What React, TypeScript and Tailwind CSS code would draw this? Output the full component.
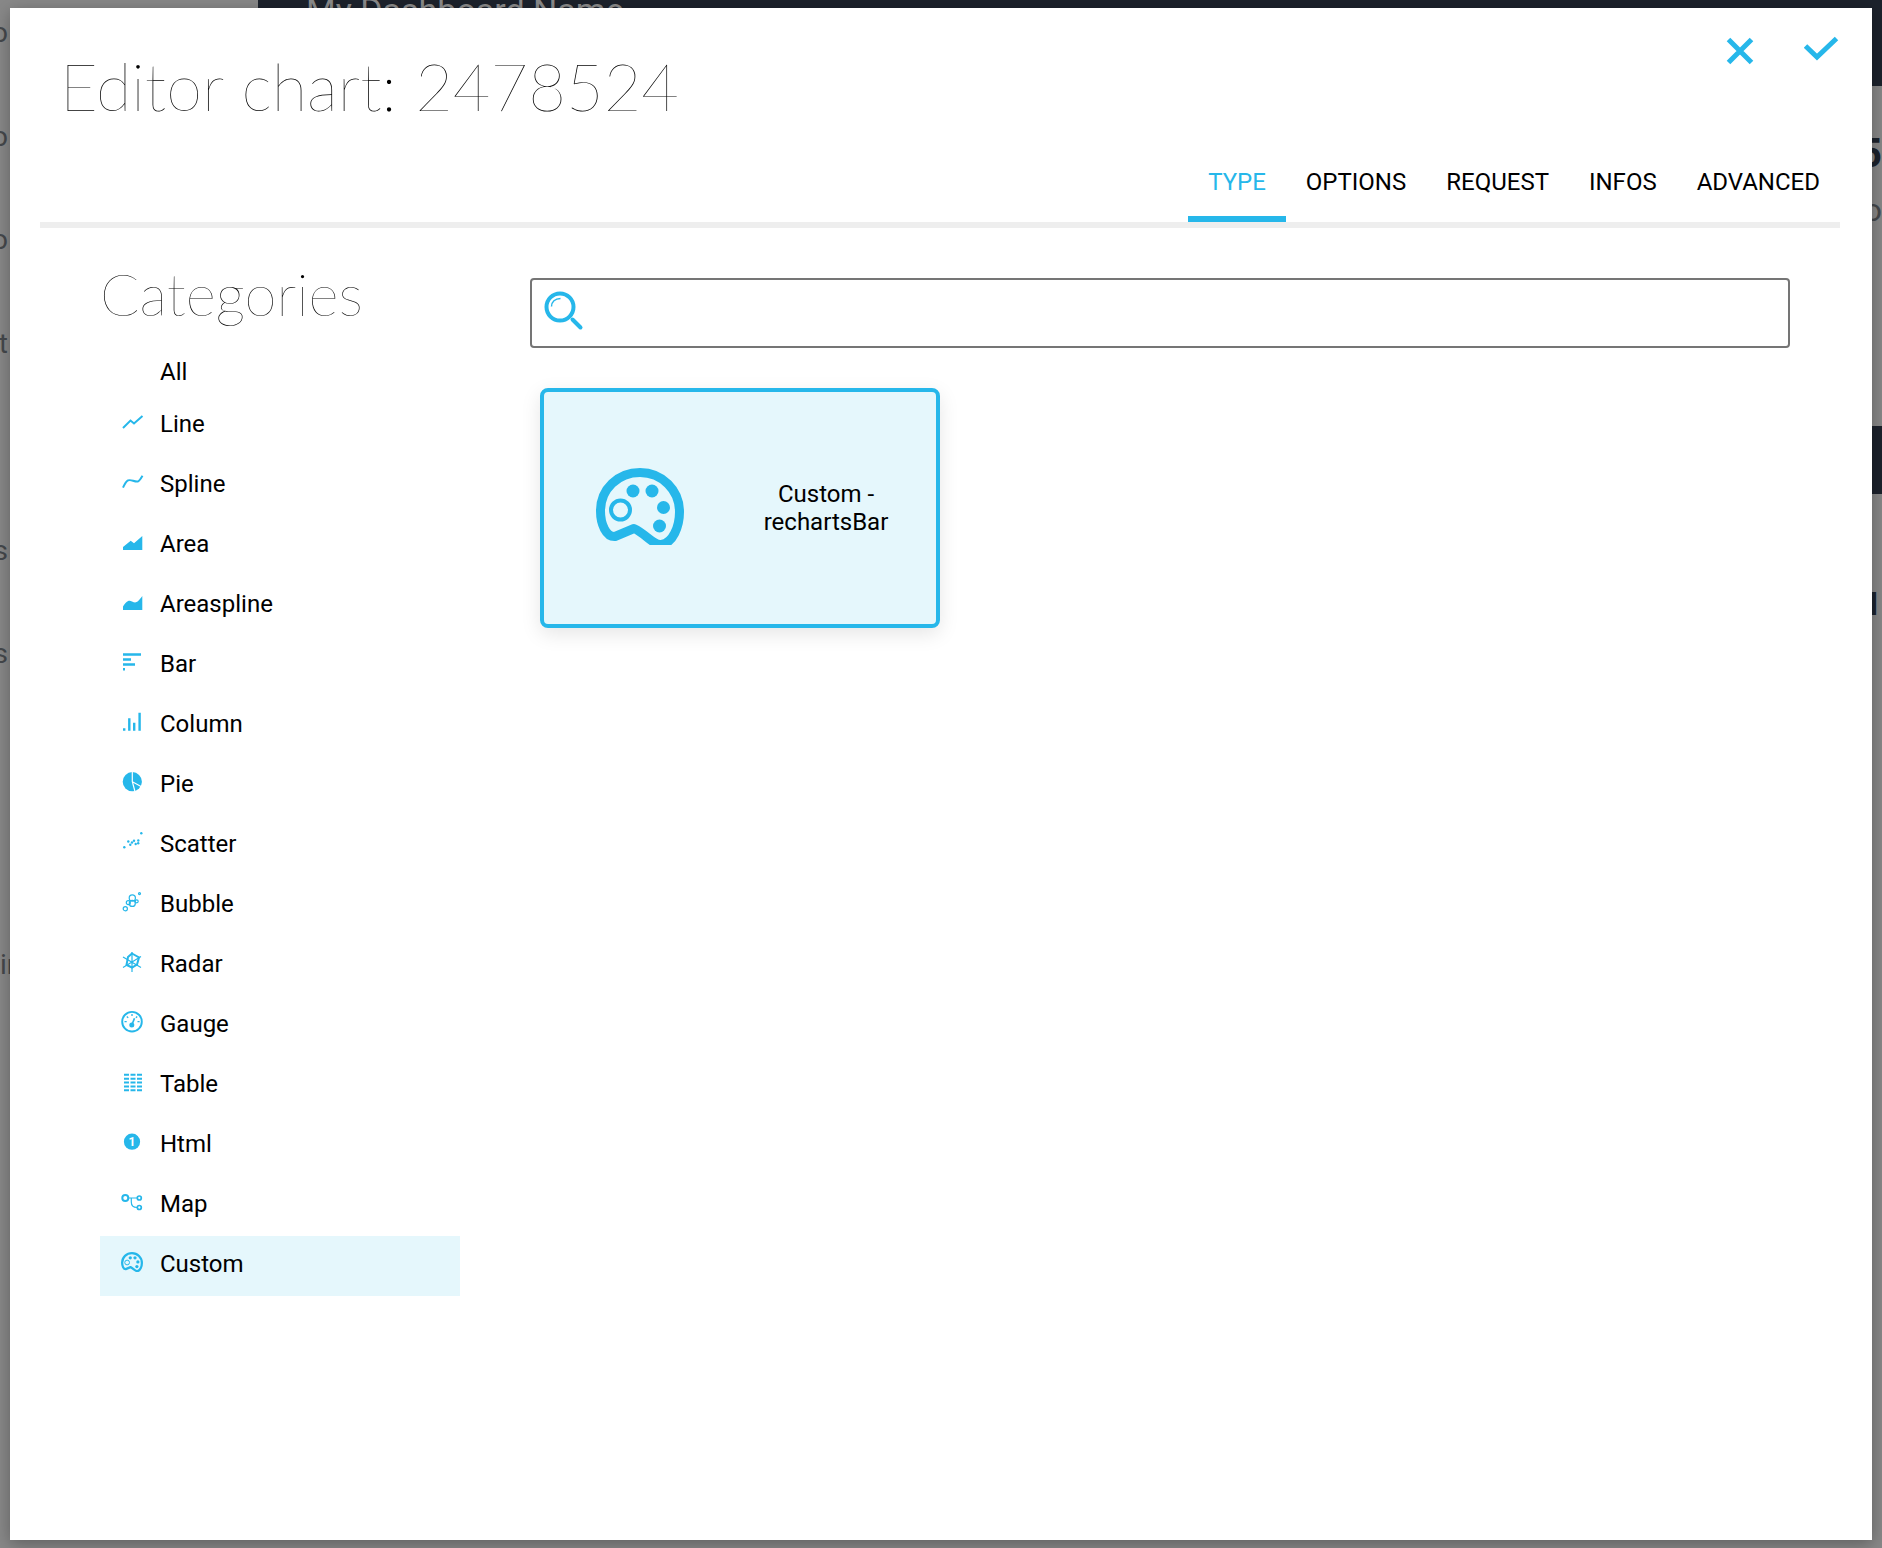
import React, { useState } from "react";

const tabs = ["TYPE", "OPTIONS", "REQUEST", "INFOS", "ADVANCED"];

function Palette({ className }: { className: string }) {
  return (
    <svg viewBox="0 0 88 77" className={className} fill="none" stroke="currentColor" aria-hidden="true">
      <path
        d="M19 68.5C10 69 4.500 56 4.500 43C4.500 21 22 4.500 44 4.500C66 4.500 83.500 22 83.500 44C83.500 58 77 75.500 65 76.500C57 77 50 66 38 60.500Z"
        strokeWidth="9"
        strokeLinejoin="round"
      />
      <circle cx="24.5" cy="42" r="9.5" strokeWidth="4" />
      <g fill="currentColor" stroke="none">
        <circle cx="37" cy="23" r="6.5" />
        <circle cx="56" cy="23" r="6.5" />
        <circle cx="67.500" cy="39.500" r="6.500" />
        <circle cx="63.500" cy="58" r="6.500" />
      </g>
    </svg>
  );
}

const dots = [[4.3, 17.3], [21.3, 3.3], [8.3, 11.5], [10.3, 14.7], [12, 12.5], [14, 10.7], [15.7, 14], [18.3, 10.5], [18.2, 13.2]];
const bubbles = [[5.3, 18.7, 2.1], [8.3, 12.7, 2], [12.3, 8, 3.1], [12.3, 13.4, 3], [16.7, 11.3, 1.5], [19.5, 3.6, 1]];
const tableRows = [4.8, 8.8, 12.6, 16.4, 20.2];

const categories: { name: string; icon: React.ReactNode }[] = [
  { name: "Line", icon: <path d="M3 18L10.500 10.500L14 13.500L22.500 6" strokeWidth="2" /> },
  { name: "Spline", icon: <path d="M3 17.700C7 9 9 9.500 13 10.700C18 12.300 18.500 12.500 22.500 5.700" strokeWidth="2" /> },
  { name: "Area", icon: <path d="M3 20V17L10.700 10.700L14 13.300L22.300 6V20Z" fill="currentColor" stroke="none" /> },
  { name: "Areaspline", icon: <path d="M3 20V16.500C7 10.500 9 10 12 11.500C16 13.300 17 13 22.300 6V20Z" fill="currentColor" stroke="none" /> },
  { name: "Bar", icon: <path d="M3 4.500H21M3 9.500H11M3 14.500H15M3 19.300H5" strokeWidth="2.400" /> },
  { name: "Column", icon: <path d="M4.200 20.700V18.300M9.300 20.700V8.300M14.200 20.700V12.700M19.600 20.700V2.700" strokeWidth="2.400" /> },
  {
    name: "Pie",
    icon: (
      <>
        <circle cx="12.300" cy="11.700" r="9.600" fill="currentColor" stroke="none" />
        <path d="M12.300 2V11.700L22 17M12.300 11.700L15 21.500" stroke="white" strokeWidth="1.200" />
      </>
    ),
  },
  { name: "Scatter", icon: <g fill="currentColor" stroke="none">{dots.map(([x, y]) => <circle key={x} cx={x} cy={y} r="1.200" />)}</g> },
  { name: "Bubble", icon: <g strokeWidth="1.200">{bubbles.map(([x, y, r]) => <circle key={`${x}-${y}`} cx={x} cy={y} r={r} />)}</g> },
  {
    name: "Radar",
    icon: (
      <>
        <path d="M12 3.500L19 7.500L17 14.500L12 17.500L6.500 15L8 7Z" strokeWidth="2" />
        <path d="M12 2V22M3 7L21 17.500M21 6.500L3 17.500" strokeWidth="1.200" />
      </>
    ),
  },
  {
    name: "Gauge",
    icon: (
      <>
        <circle cx="12" cy="11.700" r="9.800" strokeWidth="1.900" />
        <circle cx="11.800" cy="15" r="2.500" fill="currentColor" stroke="none" />
        <path d="M11.800 15L14.500 8.300" strokeWidth="1.700" />
        <path d="M12 4V6M4.500 11.700H6.700M17.500 11.700H19.600M6.800 6.500L8.200 7.900M17.200 6.500L15.900 7.800" strokeWidth="1.300" />
      </>
    ),
  },
  {
    name: "Table",
    icon: <g strokeWidth="2">{tableRows.map((y) => <path key={y} d={`M4 ${y}H9M10.500 ${y}H15.500M17 ${y}H22`} />)}</g>,
  },
  {
    name: "Html",
    icon: (
      <>
        <circle cx="12" cy="11.700" r="8.100" fill="currentColor" stroke="none" />
        <text x="12" y="16" textAnchor="middle" className="fill-white stroke-none text-[12px] font-bold">1</text>
      </>
    ),
  },
  {
    name: "Map",
    icon: (
      <>
        <circle cx="5.300" cy="8" r="3" strokeWidth="2" />
        <circle cx="19.300" cy="8" r="2" strokeWidth="1.700" />
        <circle cx="19.300" cy="17.500" r="2" strokeWidth="1.700" />
        <path d="M8.500 8H17M11.300 8V12C11.300 16 13 17.500 17 17.500" strokeWidth="1.200" />
      </>
    ),
  },
];

const menu = ["o", "o", "o", "t", "", "s", "s", "", "", "in"];

function Backdrop() {
  return (
    <div aria-hidden="true" className="absolute inset-0 flex overflow-hidden bg-[#888888] text-[#45484c]">
      <div className="w-[258px] shrink-0">
        <ul className="grid h-[1035px] grid-rows-10 text-[28px] leading-[66px]">
          {menu.map((m, i) => (
            <li key={i} className={m.length > 1 ? "flex w-2 justify-start" : "flex w-2 justify-end"}>{m}</li>
          ))}
        </ul>
      </div>
      <div className="flex grow flex-col">
        <div className="h-[86px] bg-[#1c222c] pl-12 text-[34px] leading-5 text-[#8b8b8b]">My Dashboard Name</div>
        <div className="flex h-[340px] flex-col items-end pt-10 leading-14">
          <span className="text-[40px] font-bold text-[#1c222c]">5</span>
          <span className="text-[32px]">o</span>
        </div>
        <div className="h-[68px] bg-[#1c222c]" />
        <div className="pt-[86px] pr-1 text-right text-[32px] leading-12 font-bold text-[#1c222c]">l</div>
      </div>
    </div>
  );
}

export default function App() {
  const [tab, setTab] = useState("TYPE");
  const [category, setCategory] = useState("Custom");
  const [query, setQuery] = useState("");

  return (
    <div className="relative flex min-h-screen px-2.5 py-2 font-[Roboto,sans-serif] text-2xl text-black">
      <Backdrop />
      <div role="dialog" aria-labelledby="editor-title" className="relative flex grow flex-col bg-white pr-8 pl-[30px] shadow-[0_4px_16px_rgba(0,0,0,0.3)]">
        <header className="border-b-[6px] border-[#eeeeee]">
          <div className="flex h-[134px] items-start justify-between pl-5">
            <h1 id="editor-title" className="pt-[38px] font-[Lato,sans-serif] text-[65px] leading-20 font-thin text-black">
              Editor chart: 2478524
            </h1>
            <div className="flex gap-12 pt-[27px] text-[#26b7ea]">
              <button type="button" aria-label="Close">
                <svg viewBox="0 0 32 32" className="size-8" fill="none" stroke="currentColor" strokeWidth="5" aria-hidden="true">
                  <path d="M4.500 4.500L27.500 27.500M27.500 4.500L4.500 27.500" />
                </svg>
              </button>
              <button type="button" aria-label="Confirm">
                <svg viewBox="0 0 36 32" className="h-8 w-9" fill="none" stroke="currentColor" strokeWidth="5" aria-hidden="true">
                  <path d="M1.500 11L13 22L32.500 3.500" />
                </svg>
              </button>
            </div>
          </div>
          <div role="tablist" className="flex h-20 justify-end">
            {tabs.map((t) => (
              <button
                key={t}
                type="button"
                role="tab"
                aria-selected={t === tab}
                onClick={() => setTab(t)}
                className={
                  t === tab
                    ? "border-b-[6px] border-[#26b7ea] px-5 pt-1.5 text-[#26b7ea]"
                    : "border-b-[6px] border-transparent px-5 pt-1.5"
                }
              >
                {t}
              </button>
            ))}
          </div>
        </header>

        <div className="flex grow gap-[70px] pr-[50px] pb-10 pl-[60px]">
          <nav aria-labelledby="categories-title" className="w-[360px] shrink-0">
            <h2 id="categories-title" className="h-[116px] pt-[34px] font-[Lato,sans-serif] text-[58px] leading-16 font-thin text-black">
              Categories
            </h2>
            <ul>
              <li>
                <button type="button" onClick={() => setCategory("All")} className="flex h-[52px] w-full pt-3.5 pl-[60px] leading-7">
                  All
                </button>
              </li>
              {[...categories, { name: "Custom", icon: null }].map(({ name, icon }) => (
                <li key={name}>
                  <button
                    type="button"
                    onClick={() => setCategory(name)}
                    className={
                      name === category
                        ? "flex h-15 w-full gap-4 bg-[#e5f7fc] pt-3.5 pl-5 leading-7"
                        : "flex h-15 w-full gap-4 pt-3.5 pl-5 leading-7"
                    }
                  >
                    <span className="flex size-6 items-center justify-center text-[#26b7ea]">
                      {icon ? (
                        <svg viewBox="0 0 24 24" className="size-6" fill="none" stroke="currentColor" aria-hidden="true">
                          {icon}
                        </svg>
                      ) : (
                        <Palette className="w-[22px]" />
                      )}
                    </span>
                    {name}
                  </button>
                </li>
              ))}
            </ul>
          </nav>

          <main className="grow pt-[50px]">
            <label className="flex h-[70px] items-center gap-3 rounded border-2 border-[#757575] pl-3">
              <svg viewBox="0 0 40 40" className="mb-1 size-10 text-[#26b7ea]" fill="none" stroke="currentColor" aria-hidden="true">
                <circle cx="16" cy="16" r="13.500" strokeWidth="4" />
                <path d="M7.500 15.500C7.500 11 11 7.500 16.500 7.500" strokeWidth="1.500" />
                <path d="M28.500 28.500L36.500 36.500" strokeWidth="4" strokeLinecap="round" />
              </svg>
              <input
                type="text"
                aria-label="Search charts"
                value={query}
                onChange={(e) => setQuery(e.target.value)}
                className="h-full grow outline-none"
              />
            </label>
            <button
              type="button"
              className="mt-10 ml-2.5 flex h-60 w-[400px] items-center gap-[78px] rounded-lg border-4 border-[#26b7ea] bg-[#e5f7fc] pl-[52px] shadow-[0_6px_20px_rgba(0,0,0,0.1)]"
            >
              <Palette className="mb-1 w-[88px] shrink-0 text-[#26b7ea]" />
              <span className="w-32 text-center leading-7">Custom - rechartsBar</span>
            </button>
          </main>
        </div>
      </div>
    </div>
  );
}
